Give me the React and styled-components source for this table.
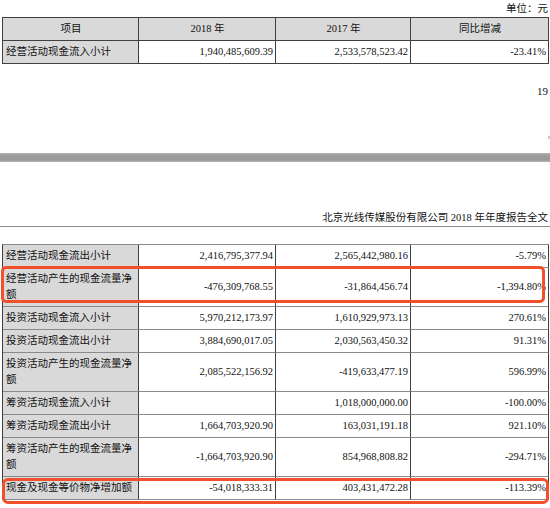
import React from "react";
import styled, { createGlobalStyle } from "styled-components";

const GlobalStyle = createGlobalStyle`
  html, body { margin: 0; padding: 0; background: #ffffff; }
  body {
    font-family: "Liberation Serif", "Noto Sans CJK SC", serif;
    font-size: 10.5px;
    color: #111111;
  }
`;

const Page = styled.div`
  width: 550px;
  height: 508px;
  overflow: hidden;
`;

const UnitLine = styled.div`
  height: 17px;
  line-height: 17px;
  text-align: right;
  padding-right: 2px;
`;

const Table = styled.div`
  margin-left: 2px;
  width: 547px;
  border-top: 1px solid ${(p) => (p.$light ? "#8a8a8a" : "#404040")};
  border-left: 1px solid #404040;
  box-sizing: border-box;
`;

const Row = styled.div`
  position: relative;
  display: grid;
  grid-template-columns: 136px 137px 135px 138px;
`;

const Cell = styled.div`
  display: flex;
  align-items: center;
  justify-content: ${(p) => (p.$center ? "center" : p.$num ? "flex-end" : "flex-start")};
  padding: 3px 2px 3px 3px;
  line-height: 16px;
  min-height: 16px;
  background: ${(p) => (p.$gray ? "#d9d9d9" : "#ffffff")};
  border-right: 1px solid #404040;
  border-bottom: 1px solid ${(p) => (p.$light ? "#8a8a8a" : "#404040")};
  text-align: ${(p) => (p.$num ? "right" : "left")};
  white-space: ${(p) => (p.$num ? "nowrap" : "normal")};
  word-break: break-all;
`;

const Highlight = styled.div`
  position: absolute;
  left: ${(p) => p.$left}px;
  right: ${(p) => p.$right}px;
  top: ${(p) => p.$top}px;
  height: ${(p) => p.$height}px;
  border: 3px solid #f0502b;
  border-radius: ${(p) => p.$radius}px;
  box-sizing: border-box;
  pointer-events: none;
`;

const PageFoot = styled.div`
  height: 89px;
  box-sizing: border-box;
  padding: 19px 2px 0 0;
  line-height: 16px;
  font-size: 11px;
  text-align: right;
  position: relative;
`;

const Tick = styled.span`
  position: absolute;
  right: 0;
  top: 72px;
  width: 2px;
  height: 3px;
  background: #c8c8c8;
`;

const Band = styled.div`
  height: 9px;
  background: linear-gradient(#b9b9b9 0, #9c9c9c 2px, #9a9a9a 7px, #b5b5b5 9px);
`;

const ReportHeader = styled.div`
  padding: 48px 2px 0 0;
  line-height: 16px;
  text-align: right;
  border-bottom: 1px solid #8c8c8c;
`;

const Gap = styled.div`
  height: 17px;
`;

const top = {
  head: ["项目", "2018 年", "2017 年", "同比增减"],
  rows: [["经营活动现金流入小计", "1,940,485,609.39", "2,533,578,523.42", "-23.41%"]],
};

const rows2 = [
  ["经营活动现金流出小计", "2,416,795,377.94", "2,565,442,980.16", "-5.79%"],
  ["经营活动产生的现金流量净额", "-476,309,768.55", "-31,864,456.74", "-1,394.80%", { left: -2, right: 4, top: -2, height: 37, radius: 5 }],
  ["投资活动现金流入小计", "5,970,212,173.97", "1,610,929,973.13", "270.61%"],
  ["投资活动现金流出小计", "3,884,690,017.05", "2,030,563,450.32", "91.31%"],
  ["投资活动产生的现金流量净额", "2,085,522,156.92", "-419,633,477.19", "596.99%"],
  ["筹资活动现金流入小计", "", "1,018,000,000.00", "-100.00%"],
  ["筹资活动现金流出小计", "1,664,703,920.90", "163,031,191.18", "921.10%"],
  ["筹资活动产生的现金流量净额", "-1,664,703,920.90", "854,968,808.82", "-294.71%"],
  ["现金及现金等价物净增加额", "-54,018,333.31", "403,431,472.28", "-113.39%", { left: -1, right: 0, top: 1, height: 26, radius: 6 }],
];

export default function App() {
  return (
    <Page>
      <GlobalStyle />
      <UnitLine>单位：元</UnitLine>
      <Table>
        <Row>
          {top.head.map((h) => (
            <Cell key={h} $gray $center>
              {h}
            </Cell>
          ))}
        </Row>
        {top.rows.map((r) => (
          <Row key={r[0]}>
            <Cell $gray>{r[0]}</Cell>
            <Cell $num>{r[1]}</Cell>
            <Cell $num>{r[2]}</Cell>
            <Cell $num>{r[3]}</Cell>
          </Row>
        ))}
      </Table>
      <PageFoot>
        19
        <Tick />
      </PageFoot>
      <Band />
      <ReportHeader>北京光线传媒股份有限公司 2018 年年度报告全文</ReportHeader>
      <Gap />
      <Table $light>
        {rows2.map((r) => (
          <Row key={r[0]}>
            <Cell $gray $light>{r[0]}</Cell>
            <Cell $num $light>{r[1]}</Cell>
            <Cell $num $light>{r[2]}</Cell>
            <Cell $num $light>{r[3]}</Cell>
            {r[4] && (
              <Highlight
                $left={r[4].left}
                $right={r[4].right}
                $top={r[4].top}
                $height={r[4].height}
                $radius={r[4].radius}
              />
            )}
          </Row>
        ))}
      </Table>
    </Page>
  );
}
